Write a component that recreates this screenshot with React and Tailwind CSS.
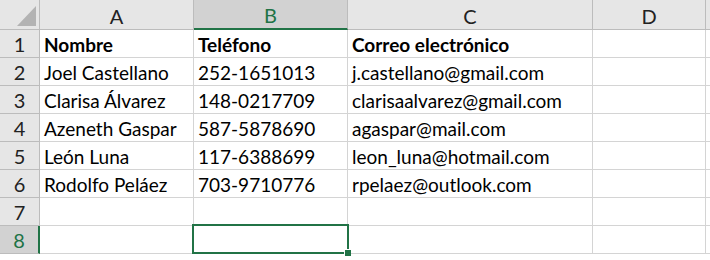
import React from "react";

const cols = [
  { key: "A", w: "w-[154px]" },
  { key: "B", w: "w-[154px]" },
  { key: "C", w: "w-[245px]" },
  { key: "D", w: "w-[113px]" },
];

const data = [
  ["Nombre", "Teléfono", "Correo electrónico", ""],
  ["Joel Castellano", "252-1651013", "j.castellano@gmail.com", ""],
  ["Clarisa Álvarez", "148-0217709", "clarisaalvarez@gmail.com", ""],
  ["Azeneth Gaspar", "587-5878690", "agaspar@mail.com", ""],
  ["León Luna", "117-6388699", "leon_luna@hotmail.com", ""],
  ["Rodolfo Peláez", "703-9710776", "rpelaez@outlook.com", ""],
  ["", "", "", ""],
  ["", "", "", ""],
];

export default function App() {
  return (
    <div
      className="w-[710px] h-[260px] overflow-hidden bg-white text-black"
      style={{ fontFamily: "Lato, 'Liberation Sans', sans-serif" }}
    >
      {/* header row */}
      <div className="flex h-[30px]">
        <div className="w-[40px] shrink-0 bg-[#e6e6e6] border-r border-b border-[#bcbcbc] relative">
          <svg className="absolute left-[17px] top-[6px]" width="19" height="20" viewBox="0 0 19 20">
            <polygon points="19,0 19,20 0,20" fill="#b3b3b3" />
          </svg>
        </div>
        {cols.map((c) => (
          <div
            key={c.key}
            className={`${c.w} shrink-0 flex items-center justify-center text-[20px] pt-[2px] ${
              c.key === "B"
                ? "bg-[#d2d2d2] text-[#217346] border-b-2 border-b-[#217346] border-r border-r-[#bcbcbc]"
                : "bg-[#e6e6e6] text-[#222] border-b border-r border-[#bcbcbc]"
            }`}
          >
            {c.key}
          </div>
        ))}
        <div className="flex-1 bg-[#e6e6e6] border-b border-[#bcbcbc]" />
      </div>
      {data.map((row, i) => {
        const rn = i + 1;
        const sel = rn === 8;
        return (
          <div key={i} className="flex h-[28px]">
            <div
              className={`w-[40px] shrink-0 flex items-end justify-center text-[20px] leading-[26px] border-b border-[#bcbcbc] ${
                sel
                  ? "bg-[#d2d2d2] text-[#217346] border-r-2 border-r-[#217346]"
                  : "bg-[#e6e6e6] text-[#222] border-r"
              }`}
            >
              {rn}
            </div>
            {cols.map((c, j) => (
              <div
                key={c.key}
                className={`${c.w} shrink-0 relative flex items-end px-[4px] text-[19px] leading-[25px] whitespace-nowrap border-r border-b border-[#d4d4d4] ${
                  i === 0 ? "font-bold" : ""
                }`}
              >
                {row[j]}
                {sel && c.key === "B" && (
                  <div className="absolute z-10 -left-[2px] -top-[2px] -right-[2px] -bottom-[1px] border-2 border-[#217346]">
                    <div className="absolute z-20 -right-[4px] -bottom-[4px] w-[7px] h-[7px] bg-[#217346] border-l border-t border-white" />
                  </div>
                )}
              </div>
            ))}
            <div className="flex-1 border-b border-[#d4d4d4]" />
          </div>
        );
      })}
    </div>
  );
}
